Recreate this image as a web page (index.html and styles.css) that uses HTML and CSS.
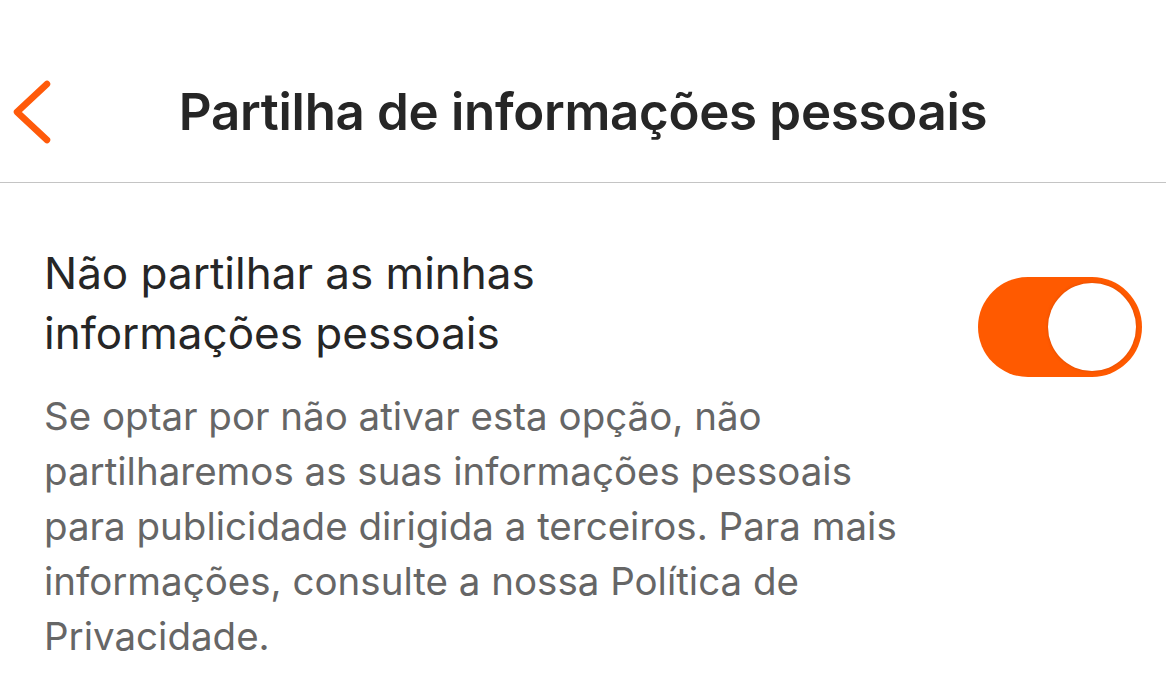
FILE: index.html
```html
<!DOCTYPE html>
<html lang="pt">
<head>
<meta charset="utf-8">
<title>Partilha de informações pessoais</title>
<link rel="stylesheet" href="styles.css">
</head>
<body>
<header class="topbar">
  <button class="back" aria-label="Voltar">
    <svg width="48" height="66" viewBox="0 0 48 66"><path d="M39 5 L9 33 L39 61" fill="none" stroke="#ff5a0a" stroke-width="6.5" stroke-linecap="round" stroke-linejoin="round"/></svg>
  </button>
  <h1 class="title">Partilha de informações pessoais</h1>
</header>
<main class="content">
  <div class="row">
    <h2 class="label">Não partilhar as minhas<br>informações pessoais</h2>
    <div class="toggle on"><span class="knob"></span></div>
  </div>
  <p class="desc">Se optar por não ativar esta opção, não<br>partilharemos as suas informações pessoais<br>para publicidade dirigida a terceiros. Para mais<br>informações, consulte a nossa Política de<br>Privacidade.</p>
</main>
</body>
</html>
```
FILE: styles.css
```css
html, body {
  margin: 0;
  padding: 0;
  background: #ffffff;
  font-family: Inter, "Noto Sans", "Liberation Sans", sans-serif;
}
.topbar {
  position: relative;
  height: 182px;
  border-bottom: 1.5px solid #c4c4c4;
  display: flex;
  align-items: center;
  justify-content: center;
}
.back {
  position: absolute;
  left: 8px;
  top: 79px;
  border: 0;
  background: none;
  padding: 0;
  line-height: 0;
}
.title {
  margin: 0;
  padding-top: 40px;
  font-size: 51px;
  font-weight: 600;
  color: #262626;
  letter-spacing: -0.3px;
}
.content {
  padding: 0 24px 0 44px;
}
.row {
  display: flex;
  align-items: flex-start;
  justify-content: space-between;
  padding-top: 60px;
}
.label {
  margin: 0;
  font-size: 44px;
  font-weight: 400;
  line-height: 60px;
  color: #262626;
}
.toggle {
  width: 164px;
  height: 100px;
  border-radius: 50px;
  background: #ff5a00;
  position: relative;
  margin-top: 34px;
}
.knob {
  position: absolute;
  right: 6px;
  top: 6px;
  width: 88px;
  height: 88px;
  border-radius: 50%;
  background: #fff;
  box-shadow: 0 0 3px rgba(180,60,0,0.5);
}
.desc {
  margin: 12px 0 0 0;
  font-size: 38.5px;
  line-height: 55px;
  color: #666666;
}
```
